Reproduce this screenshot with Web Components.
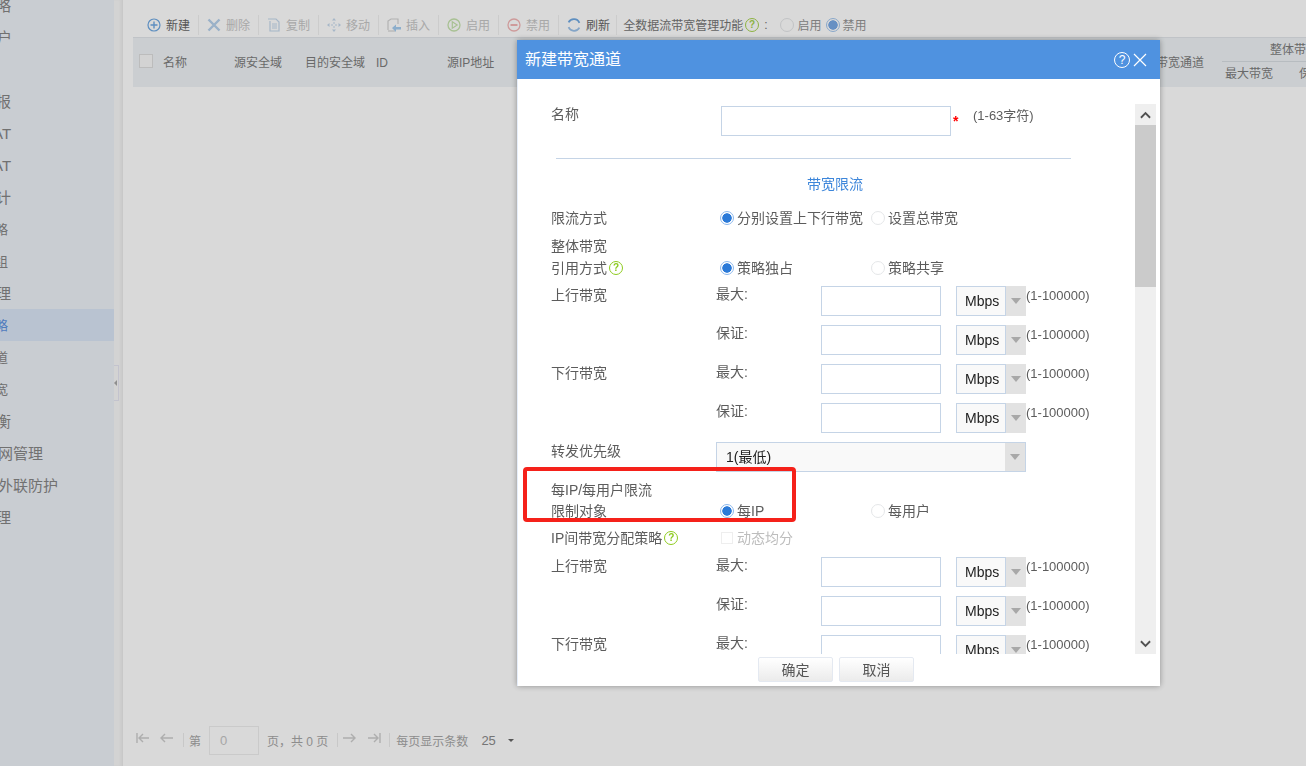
<!DOCTYPE html>
<html lang="zh">
<head>
<meta charset="utf-8">
<title>新建带宽通道</title>
<style>
  html, body { margin: 0; height: 766px; overflow: hidden; background: #fff; }
  body { display: flex; font-family: "Liberation Sans", "Noto Sans CJK SC", sans-serif; }
  x-modal .r-name { margin-top: 27px; height: 30px; }
  x-modal .r-section { margin-top: 13px; height: 24px; }
  x-modal .r-mode { margin-top: 13px; height: 24px; }
  x-modal .r-head { margin-top: 4px; height: 22px; }
  x-modal .r-line { height: 22px; }
  x-modal .r-bw { margin-top: 9px; }
  x-modal .r-first { margin-top: 5px; }
  x-modal .r-prio { margin-top: 9px; height: 30px; }
  x-modal .r-peruser { margin-top: 9px; height: 21px; }
  x-modal .r-limit { height: 20px; }
  x-modal .r-ipshare { margin-top: 7px; height: 22px; }
  x-modal .r-second { margin-top: 6px; }
</style>
</head>
<body>
<x-sidebar>
  <x-nav-item style="--x:-4px">略</x-nav-item>
  <x-nav-item style="--x:-3px">户</x-nav-item>
  <x-nav-item></x-nav-item>
  <x-nav-item style="--x:-4px">报</x-nav-item>
  <x-nav-item style="--x:-7px">AT</x-nav-item>
  <x-nav-item style="--x:-7px">AT</x-nav-item>
  <x-nav-item style="--x:-4px">计</x-nav-item>
  <x-nav-item small style="--x:-5px">略</x-nav-item>
  <x-nav-item small style="--x:-5px">组</x-nav-item>
  <x-nav-item style="--x:-4px">理</x-nav-item>
  <x-nav-item small active style="--x:-5px">略</x-nav-item>
  <x-nav-item small style="--x:-5px">道</x-nav-item>
  <x-nav-item small style="--x:-5px">宽</x-nav-item>
  <x-nav-item style="--x:-4px">衡</x-nav-item>
  <x-nav-item style="--x:-2px">网管理</x-nav-item>
  <x-nav-item style="--x:-2px">外联防护</x-nav-item>
  <x-nav-item style="--x:-4px">理</x-nav-item>
</x-sidebar>
<x-gutter></x-gutter>
<x-main></x-main>
<x-mask></x-mask>
<x-modal heading="新建带宽通道">
  <x-form-row class="r-name" label="名称" style="--lift:-1px">
    <x-name-field></x-name-field>
  </x-form-row>
  <x-divider></x-divider>
  <x-section class="r-section">带宽限流</x-section>
  <x-form-row class="r-mode" label="限流方式">
    <x-radio-pair first="分别设置上下行带宽" second="设置总带宽"></x-radio-pair>
  </x-form-row>
  <x-form-row class="r-head" label="整体带宽"></x-form-row>
  <x-form-row class="r-line" label="引用方式" help>
    <x-radio-pair first="策略独占" second="策略共享"></x-radio-pair>
  </x-form-row>
  <x-bw-row class="r-first" label="上行带宽" sub="最大:"></x-bw-row>
  <x-bw-row class="r-bw" sub="保证:"></x-bw-row>
  <x-bw-row class="r-bw" label="下行带宽" sub="最大:"></x-bw-row>
  <x-bw-row class="r-bw" sub="保证:"></x-bw-row>
  <x-form-row class="r-prio" label="转发优先级">
    <x-wide-select>1(最低)</x-wide-select>
  </x-form-row>
  <x-form-row class="r-peruser" label="每IP/每用户限流"></x-form-row>
  <x-form-row class="r-limit" label="限制对象">
    <x-radio-pair first="每IP" second="每用户"></x-radio-pair>
  </x-form-row>
  <x-form-row class="r-ipshare" label="IP间带宽分配策略" help>
    <x-disabled-check>动态均分</x-disabled-check>
  </x-form-row>
  <x-bw-row class="r-second" label="上行带宽" sub="最大:"></x-bw-row>
  <x-bw-row class="r-bw" sub="保证:"></x-bw-row>
  <x-bw-row class="r-bw" label="下行带宽" sub="最大:"></x-bw-row>
  <x-modal-button slot="footer">确定</x-modal-button>
  <x-modal-button slot="footer">取消</x-modal-button>
</x-modal>
<x-highlight></x-highlight>

<script>
// small base class, everything below just sets its shadow html
class Base extends HTMLElement {
  constructor() {
    super();
    this.attachShadow({ mode: 'open' });
  }
  render(html) {
    this.shadowRoot.innerHTML = html;
  }
}

class XSidebar extends Base {
  connectedCallback() {
    this.render(`
      <style>
        :host { display: block; width: 114px; height: 766px; flex: none; overflow: hidden; background: #edf1f7; }
        div { margin-top: -11px; }
      </style>
      <div><slot></slot></div>`);
  }
}
customElements.define('x-sidebar', XSidebar);

class XNavItem extends Base {
  connectedCallback() {
    this.render(`
      <style>
        :host { display: block; height: 32px; line-height: 33px; white-space: nowrap; overflow: hidden;
          font-size: 15px; color: #858585; }
        :host([small]) { font-size: 13px; }
        :host([active]) { background: #dae6f6; color: #5f93e0; }
        span { display: inline-block; margin-left: var(--x, 0); }
      </style>
      <span><slot></slot></span>`);
  }
}
customElements.define('x-nav-item', XNavItem);

class XGutter extends Base {
  connectedCallback() {
    this.render(`
      <style>
        :host { display: flex; align-items: center; width: 9px; flex: none; background: #f8f8f8;
          border-right: 1px solid #ececec; box-sizing: border-box; box-shadow: inset -2px 0 2px #f0f0f0; }
        div { width: 4px; height: 34px; border: 1px solid #e6e6f2; border-left: 0; display: flex; align-items: center; }
        i { display: block; border: 3px solid transparent; border-left: 0; border-right: 3px solid #a9a9a9; }
      </style>
      <div><i></i></div>`);
  }
}
customElements.define('x-gutter', XGutter);

const ICONS = {
  plus: '<circle cx="7" cy="7" r="6" fill="none" stroke="#6fa8e2" stroke-width="1.2"/><path d="M7 3.5v7M3.5 7h7" stroke="#6fa8e2" stroke-width="1.4"/>',
  del: '<path d="M1.5 1.5l11 11M12.5 1.5l-11 11" stroke="#b5d0ec" stroke-width="2.4"/>',
  copy: '<path d="M1 1h8l3 3v9H3V3" fill="none" stroke="#c4d8ec" stroke-width="1.2"/><path d="M5 6h5M5 8h5M5 10h5" stroke="#c4d8ec"/>',
  move: '<path d="M7 0l2 2.5H5zM7 14l2-2.5H5zM0 7l2.5-2v4zM14 7l-2.5-2v4z" fill="#c4d8ec"/><path d="M7 4v2M7 8v2M4 7h2M8 7h2" stroke="#c4d8ec"/>',
  insert: '<path d="M1 12V3l3-2h7v5" fill="none" stroke="#d2d2d2" stroke-width="1.2"/><path d="M1 13h7" stroke="#d2d2d2" stroke-width="1.2"/><path d="M5 10l4-3.5V9h6v2.5H9V14z" fill="#a5cdf0"/>',
  play: '<circle cx="7" cy="7" r="6" fill="none" stroke="#c6e3ad" stroke-width="1.3"/><path d="M5.3 3.8L10.2 7l-4.9 3.2z" fill="none" stroke="#c6e3ad" stroke-width="1.2"/>',
  stop: '<circle cx="7" cy="7" r="6" fill="none" stroke="#f3b6b6" stroke-width="1.3"/><path d="M3.5 7h7" stroke="#f3b6b6" stroke-width="2"/>',
  refresh: '<path d="M12.4 4.8A6 6 0 0 0 1.6 4.4" fill="none" stroke="#6fa8e2" stroke-width="1.8"/><path d="M1.6 9.2A6 6 0 0 0 12.4 9.6" fill="none" stroke="#9cc2ea" stroke-width="1.8"/>'
};

class XTool extends Base {
  connectedCallback() {
    const name = this.getAttribute('icon');
    this.render(`
      <style>
        :host { display: flex; align-items: center; height: 20px; padding: 0 8px 0 8px; border-right: 1px solid #f0f0f0;
          font-size: 12px; color: #c6c6c6; white-space: nowrap; }
        :host([on]) { color: #666; }
        svg { width: 14px; height: 14px; margin-right: 5px; flex: none; }
      </style>
      <svg viewBox="0 0 14 14">${ICONS[name]}</svg><slot></slot>`);
  }
}
customElements.define('x-tool', XTool);

class XHelp extends Base {
  connectedCallback() {
    this.render(`
      <style>
        :host { display: inline-flex; align-items: center; justify-content: center; width: 14px; height: 14px;
          box-sizing: border-box; border: 1.5px solid var(--help, #8ecb1e); border-radius: 50%; flex: none;
          font: bold 10px/1 "Liberation Sans", sans-serif; color: var(--help, #8ecb1e); }
      </style>?`);
  }
}
customElements.define('x-help', XHelp);

class XRadio extends Base {
  connectedCallback() {
    this.render(`
      <style>
        :host { display: inline-flex; align-items: center; white-space: nowrap; }
        i { display: block; box-sizing: border-box; width: 14px; height: 14px; border-radius: 50%;
          border: 1px solid #e4e6e8; background: #fff; margin-right: 3px; flex: none; }
        :host([checked]) i { border: 1.5px solid var(--ring, #8db8ec);
          background: radial-gradient(circle, var(--dot, #2b7ad8) 0 4.4px, #fff 5px); }
      </style>
      <i></i><slot></slot>`);
  }
}
customElements.define('x-radio', XRadio);

class XToolbar extends Base {
  connectedCallback() {
    this.render(`
      <style>
        :host { display: flex; align-items: center; height: 25px; padding-left: 16px; }
        .last { padding-right: 6px; }
        .switch { display: flex; align-items: center; margin-left: 6px; font-size: 12px; color: #757575; white-space: nowrap; }
        x-help { margin-left: 2px; --help: #a6d24e; }
        .colon { margin: 0 13px 0 5px; }
        x-radio { color: #949494; margin-right: 4px; --ring: #a3c6ee; --dot: #7aaae6; }
      </style>
      <x-tool icon="plus" on>新建</x-tool>
      <x-tool icon="del">删除</x-tool>
      <x-tool icon="copy">复制</x-tool>
      <x-tool icon="move">移动</x-tool>
      <x-tool icon="insert">插入</x-tool>
      <x-tool icon="play">启用</x-tool>
      <x-tool icon="stop">禁用</x-tool>
      <x-tool icon="refresh" on class="last">刷新</x-tool>
      <div class="switch">全数据流带宽管理功能<x-help></x-help><span class="colon">:</span>
        <x-radio>启用</x-radio><x-radio checked>禁用</x-radio>
      </div>`);
  }
}
customElements.define('x-toolbar', XToolbar);

class XTableHead extends Base {
  connectedCallback() {
    this.render(`
      <style>
        :host { display: flex; height: 50px; margin-left: 10px; box-sizing: border-box; border-top: 1px solid #e2e6ea;
          background: #eff3f6; font-size: 12px; color: #7c7c7c; white-space: nowrap; overflow: hidden; }
        .check { flex: none; width: 14px; height: 14px; margin: 16px 10px 0 6px; background: #f8f8f8; border: 1px solid #ddd; box-sizing: border-box; }
        .cell { flex: none; width: 71px; line-height: 50px; }
        .gap { flex: none; width: 638px; }
        .chan { flex: none; width: 66px; line-height: 50px; }
        .group { flex: none; width: 200px; }
        .group div { height: 23px; line-height: 25px; padding-left: 48px; border-bottom: 1px solid #d8dde2; }
        .group p { margin: 0; display: flex; line-height: 24px; padding-left: 3px; }
        .group span { width: 74px; }
      </style>
      <div class="check"></div>
      <div class="cell">名称</div>
      <div class="cell">源安全域</div>
      <div class="cell">目的安全域</div>
      <div class="cell">ID</div>
      <div class="cell">源IP地址</div>
      <div class="gap"></div>
      <div class="chan">带宽通道</div>
      <div class="group"><div>整体带宽</div><p><span>最大带宽</span><span>保证带宽</span></p></div>`);
  }
}
customElements.define('x-table-head', XTableHead);

class XPager extends Base {
  connectedCallback() {
    const arrow = (d) => `<svg viewBox="0 0 14 12"><path d="${d}" fill="none" stroke="#cdcdcd" stroke-width="1.4"/></svg>`;
    this.render(`
      <style>
        :host { display: flex; align-items: center; height: 30px; margin-bottom: 11px; padding-left: 13px;
          font-size: 12px; color: #a6a6a6; white-space: nowrap; }
        svg { width: 14px; height: 12px; flex: none; margin-top: -5px; }
        .sep { width: 1px; height: 14px; background: #ececec; flex: none; }
        .box { width: 50px; height: 29px; box-sizing: border-box; border: 1px solid #eee; padding-left: 10px; line-height: 28px;
          margin: 0 8px; color: #c4c4c4; font-size: 13px; }
        .num { color: #8a8a8a; font-size: 13px; margin: 0 12px 0 13px; }
        i { border: 3px solid transparent; border-top: 3px solid #666; border-bottom: 0; }
      </style>
      ${arrow('M1 1v10M13 6H3M7 2L3 6l4 4')}
      <span style="width:10px"></span>
      ${arrow('M13 6H1M5 2L1 6l4 4')}
      <span style="width:9px"></span><div class="sep"></div><span style="width:5px"></span>
      <span>第</span><div class="box">0</div>
      <span>页，共 0 页</span>
      <span style="width:9px"></span><div class="sep"></div><span style="width:4px"></span>
      ${arrow('M1 6h12M9 2l4 4-4 4')}
      <span style="width:11px"></span>
      ${arrow('M13 1v10M1 6h10M7 2l4 4-4 4')}
      <span style="width:8px"></span><div class="sep"></div><span style="width:6px"></span>
      <span>每页显示条数</span><span class="num">25</span><i></i>`);
  }
}
customElements.define('x-pager', XPager);

class XMain extends Base {
  connectedCallback() {
    this.render(`
      <style>
        :host { display: flex; flex-direction: column; flex: 1; min-width: 0; height: 766px; padding-top: 12px; box-sizing: border-box; }
        .fill { flex: 1; }
      </style>
      <x-toolbar></x-toolbar>
      <x-table-head></x-table-head>
      <div class="fill"></div>
      <x-pager></x-pager>`);
  }
}
customElements.define('x-main', XMain);

// dim layer behind the dialog
class XMask extends Base {
  connectedCallback() {
    this.render(`<style>:host { position: fixed; inset: 0; background: rgba(0,0,0,.15); }</style>`);
  }
}
customElements.define('x-mask', XMask);

class XModal extends Base {
  connectedCallback() {
    this.render(`
      <style>
        :host { position: fixed; left: 517px; top: 40px; width: 643px; height: 646px; display: flex; flex-direction: column;
          background: #fff; box-shadow: inset 1px 0 #e6eefa, 0 0 6px rgba(0,0,0,.35); font-size: 14px; color: #5c5c5c; }
        header { display: flex; align-items: center; height: 39px; flex: none; box-sizing: border-box; background: #4f92e0; color: #fff;
          font-size: 16px; padding: 0 0 3px 8px; }
        header span { flex: 1; }
        .q { --help: #fff; width: 16px; height: 16px; font-size: 12px; font-weight: normal; margin: 3px 3px 0 0; }
        header svg { width: 14px; height: 14px; margin: 3px 13px 0 0; }
        .middle { display: flex; flex: none; height: 575px; }
        .body { flex: 1; overflow: hidden; }
        footer { flex: 1; display: flex; gap: 6px; padding: 3px 0 0 241px; }
      </style>
      <header>
        <span>${this.getAttribute('heading')}</span>
        <x-help class="q"></x-help>
        <svg viewBox="0 0 14 14"><path d="M1 1l12 12M13 1L1 13" stroke="#fff" stroke-width="1.2"/></svg>
      </header>
      <div class="middle">
        <div class="body"><slot></slot></div>
        <x-scrollbar></x-scrollbar>
      </div>
      <footer><slot name="footer"></slot></footer>`);
  }
}
customElements.define('x-modal', XModal);

class XScrollbar extends Base {
  connectedCallback() {
    const chev = (d) => `<div class="btn"><svg viewBox="0 0 12 8"><path d="${d}" fill="none" stroke="#505050" stroke-width="2"/></svg></div>`;
    this.render(`
      <style>
        :host { display: flex; flex-direction: column; width: 21px; flex: none; margin: 25px 4px 0 0; background: #efefef; }
        .btn { height: 21px; flex: none; display: flex; align-items: center; justify-content: center; }
        svg { width: 11px; height: 8px; }
        .thumb { height: 162px; background: #cbcbcb; flex: none; }
        .rest { flex: 1; }
      </style>
      ${chev('M1 7l5-5 5 5')}
      <div class="thumb"></div>
      <div class="rest"></div>
      ${chev('M1 1l5 5 5-5')}`);
  }
}
customElements.define('x-scrollbar', XScrollbar);

class XFormRow extends Base {
  connectedCallback() {
    const help = this.hasAttribute('help') ? '<x-help></x-help>' : '';
    this.render(`
      <style>
        :host { display: flex; padding-left: 34px; line-height: 18px; }
        .label { display: flex; align-items: center; align-self: flex-start; width: 165px; flex: none; height: 18px;
          gap: 2px; white-space: nowrap; margin-top: var(--lift, 0); }
        .ctl { flex: 1; }
      </style>
      <div class="label">${this.getAttribute('label')}${help}</div>
      <div class="ctl"><slot></slot></div>`);
  }
}
customElements.define('x-form-row', XFormRow);

class XNameField extends Base {
  connectedCallback() {
    this.render(`
      <style>
        :host { display: flex; padding-left: 5px; white-space: nowrap; font-size: 13px; }
        .in { width: 230px; height: 30px; box-sizing: border-box; border: 1px solid #c5d4e6; flex: none; }
        .star { color: #f00; width: 22px; padding: 6px 0 0 2px; box-sizing: border-box; font-size: 14px; font-weight: bold; }
        .hint { margin-top: 1px; }
      </style>
      <div class="in"></div><span class="star">*</span><span class="hint">(1-63字符)</span>`);
  }
}
customElements.define('x-name-field', XNameField);

class XDivider extends Base {
  connectedCallback() {
    this.render(`<style>:host { display: block; height: 1px; margin: 22px 0 0 39px; width: 515px; background: #c5d4e6; }</style>`);
  }
}
customElements.define('x-divider', XDivider);

class XSection extends Base {
  connectedCallback() {
    this.render(`
      <style>:host { display: block; padding-left: 290px; line-height: 24px; font-size: 14px; color: #3d86da; }</style>
      <slot></slot>`);
  }
}
customElements.define('x-section', XSection);

class XRadioPair extends Base {
  connectedCallback() {
    this.render(`
      <style>
        :host { display: grid; grid-template-columns: 151px 1fr; padding-left: 4px; }
      </style>
      <x-radio checked>${this.getAttribute('first')}</x-radio>
      <x-radio>${this.getAttribute('second')}</x-radio>`);
  }
}
customElements.define('x-radio-pair', XRadioPair);

class XBwRow extends Base {
  connectedCallback() {
    this.render(`
      <style>
        :host { display: flex; height: 30px; padding-left: 34px; line-height: 18px; white-space: nowrap; }
        .label { width: 165px; flex: none; }
        .sub { width: 105px; flex: none; margin-top: -1px; }
        .in { width: 120px; height: 30px; box-sizing: border-box; border: 1px solid #c5d4e6; margin-right: 15px; flex: none; }
        .sel { display: flex; width: 70px; height: 30px; flex: none; }
        .val { width: 50px; box-sizing: border-box; border: 1px solid #c5d4e6; background: #f9f9f9; color: #222;
          padding-left: 8px; line-height: 28px; font-size: 14px; }
        .arrow { flex: 1; background: #e2e2e2; display: flex; align-items: center; justify-content: center; }
        .arrow i { border: 5px solid transparent; border-top: 6px solid #a8a8a8; border-bottom: 0; }
        .range { font-size: 13px; line-height: 18px; margin-top: 1px; }
      </style>
      <div class="label">${this.getAttribute('label') || ''}</div>
      <div class="sub">${this.getAttribute('sub')}</div>
      <div class="in"></div>
      <div class="sel"><div class="val">Mbps</div><div class="arrow"><i></i></div></div>
      <div class="range">(1-100000)</div>`);
  }
}
customElements.define('x-bw-row', XBwRow);

class XWideSelect extends Base {
  connectedCallback() {
    this.render(`
      <style>
        :host { display: flex; width: 310px; height: 30px; box-sizing: border-box; border: 1px solid #c5d4e6; background: #f9f9f9; color: #222; }
        .val { flex: 1; padding-left: 9px; line-height: 28px; }
        .arrow { width: 20px; background: #e2e2e2; display: flex; align-items: center; justify-content: center; }
        i { border: 5px solid transparent; border-top: 6px solid #a8a8a8; border-bottom: 0; }
      </style>
      <div class="val"><slot></slot></div><div class="arrow"><i></i></div>`);
  }
}
customElements.define('x-wide-select', XWideSelect);

class XDisabledCheck extends Base {
  connectedCallback() {
    this.render(`
      <style>
        :host { display: flex; align-items: center; padding-left: 5px; color: #bdbdbd; }
        i { width: 12px; height: 12px; box-sizing: border-box; border: 1px solid #eee; margin-right: 4px; }
      </style>
      <i></i><slot></slot>`);
  }
}
customElements.define('x-disabled-check', XDisabledCheck);

class XModalButton extends Base {
  connectedCallback() {
    this.render(`
      <style>
        :host { display: block; width: 75px; height: 25px; box-sizing: border-box; border: 1px solid #e4e9f1; border-radius: 2px;
          background: linear-gradient(#fff, #ebebeb); text-align: center; line-height: 24px; font-size: 14px; color: #555; }
      </style>
      <slot></slot>`);
  }
}
customElements.define('x-modal-button', XModalButton);

// the red annotation box drawn over the shot
class XHighlight extends Base {
  connectedCallback() {
    this.render(`
      <style>
        :host { position: fixed; left: 523px; top: 467px; width: 273px; height: 55px; box-sizing: border-box;
          border: 4px solid #f5211a; border-radius: 4px; }
      </style>`);
  }
}
customElements.define('x-highlight', XHighlight);
</script>
</body>
</html>
